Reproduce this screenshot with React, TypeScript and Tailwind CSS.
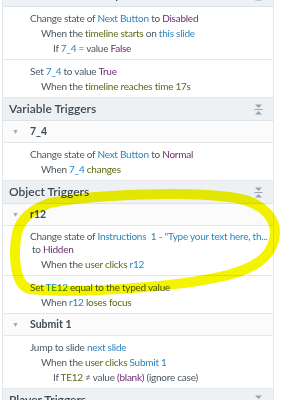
type Part = [string, 'g' | 'b' | 'p' | 'o']

const tone = {
  g: 'text-[#4b5863]',
  b: 'text-[#2c84bb]',
  p: 'text-[#6b2c6e]',
  o: 'text-[#5a6a18]',
}

const Line = ({ parts, indent = 0 }: { parts: Part[]; indent?: number }) => (
  <div
    className={`whitespace-nowrap leading-[15px] ${indent === 1 ? 'pl-[11px]' : indent === 2 ? 'pl-[23px]' : ''}`}
  >
    {parts.map(([t, c], i) => (
      <span key={i} className={tone[c]}>
        {i > 0 ? ' ' : ''}
        {t}
      </span>
    ))}
  </div>
)

const CollapseIcon = () => (
  <svg width="9" height="11" viewBox="0 0 9 11" className="mr-[10px]">
    <path d="M1 0.5h7L4.5 4z" fill="#9aa3ab" />
    <rect x="0.5" y="5" width="8" height="1" fill="#9aa3ab" />
    <path d="M1 10.5h7L4.5 7z" fill="#9aa3ab" />
  </svg>
)

const Section = ({ title, className = '' }: { title: string; className?: string }) => (
  <div
    className={`flex h-[23px] shrink-0 items-center justify-between border-b border-[#dfe3e8] bg-[#eef1f4] pl-[6px] text-[12px] font-semibold text-[#3f4a54] ${className}`}
  >
    <span>{title}</span>
    <CollapseIcon />
  </div>
)

const Group = ({ name }: { name: string }) => (
  <div className="flex h-[22px] shrink-0 items-center border-b border-[#e4e7eb] bg-[#fbfbfb] text-[10.5px] font-bold text-[#3f4a54]">
    <span className="w-[27px] pl-[9px] text-[7px] text-[#a3aab1]">▼</span>
    <span>{name}</span>
  </div>
)

const Block = ({ children }: { children: React.ReactNode }) => (
  <div className="shrink-0 border-b border-[#e4e7eb] bg-white pb-[3px] pl-[27px] pt-[4px] text-[10px] tracking-[-0.25px]">
    {children}
  </div>
)

export default function App() {
  return (
    <div
      className="relative flex h-[400px] w-[284px] overflow-hidden bg-white"
      style={{ fontFamily: 'Lato, "Noto Sans", sans-serif' }}
    >
      <div className="w-[3px] shrink-0 border-r border-[#e3e6ea]" />
      <div className="flex w-[270px] shrink-0 flex-col">
        <Section title="Slide - 1.1 Leadership Intentions" className="-mt-[16px]" />
        <Block>
          <Line parts={[['Change state of', 'g'], ['Next Button', 'b'], ['to', 'g'], ['Disabled', 'p']]} />
          <Line indent={1} parts={[['When the', 'g'], ['timeline starts', 'o'], ['on', 'g'], ['this slide', 'b']]} />
          <Line indent={2} parts={[['If', 'g'], ['7_4', 'b'], ['= value', 'g'], ['False', 'p']]} />
        </Block>
        <Block>
          <Line parts={[['Set', 'g'], ['7_4', 'b'], ['to value', 'g'], ['True', 'p']]} />
          <Line indent={1} parts={[['When the', 'g'], ['timeline reaches time 17s', 'o']]} />
        </Block>
        <Section title="Variable Triggers" />
        <Group name="7_4" />
        <Block>
          <Line parts={[['Change state of', 'g'], ['Next Button', 'b'], ['to', 'g'], ['Normal', 'p']]} />
          <Line indent={1} parts={[['When', 'g'], ['7_4', 'b'], ['changes', 'o']]} />
        </Block>
        <Section title="Object Triggers" />
        <Group name="r12" />
        <Block>
          <div className="whitespace-nowrap leading-[13px]">
            <span className={tone.g}>Change state of </span>
            <span className={tone.b}>Instructions&nbsp; 1 - "Type your text here, th...</span>
          </div>
          <div className="whitespace-nowrap pl-[2px] leading-[13px]">
            <span className={tone.g}>to </span>
            <span className={tone.p}>Hidden</span>
          </div>
          <div className="mt-[1px]">
            <Line indent={1} parts={[['When the', 'g'], ['user clicks', 'o'], ['r12', 'b']]} />
          </div>
        </Block>
        <Block>
          <Line parts={[['Set', 'g'], ['TE12', 'b'], ['equal to the typed value', 'g']]} />
          <Line indent={1} parts={[['When', 'g'], ['r12', 'b'], ['loses focus', 'o']]} />
        </Block>
        <Group name="Submit 1" />
        <Block>
          <Line parts={[['Jump to slide', 'g'], ['next slide', 'b']]} />
          <Line indent={1} parts={[['When the', 'g'], ['user clicks', 'o'], ['Submit 1', 'b']]} />
          <Line indent={2} parts={[['If', 'g'], ['TE12', 'o'], ['≠ value', 'g'], ['(blank)', 'p'], ['(ignore case)', 'g']]} />
        </Block>
        <Section title="Player Triggers" />
      </div>
      <div className="flex-1 border-l border-[#e6e9ec] bg-white" />

      <svg
        className="pointer-events-none absolute left-0 top-0 mix-blend-multiply"
        width="284"
        height="400"
        viewBox="0 0 284 400"
      >
        <path
          d="M50 203 C 95 194, 190 191, 236 198 C 264 203, 279 220, 274 240 C 270 258, 254 268, 228 275 C 180 287, 80 294, 30 289 C 14 285, 13 254, 17 233 C 21 218, 32 209, 50 203"
          fill="none"
          stroke="#f4f400"
          strokeWidth="10"
          strokeLinecap="round"
        />
      </svg>
    </div>
  )
}
